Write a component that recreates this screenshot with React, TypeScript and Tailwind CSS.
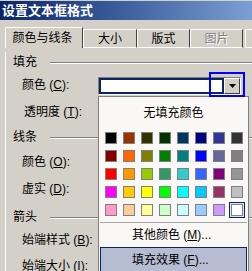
const palette = [
  ["#000000", "#993300", "#333300", "#003300", "#003366", "#000080", "#333399", "#333333"],
  ["#800000", "#FF6600", "#808000", "#008000", "#008080", "#0000FF", "#666699", "#808080"],
  ["#FF0000", "#FF9900", "#99CC00", "#339966", "#33CCCC", "#3366FF", "#800080", "#969696"],
  ["#FF00FF", "#FFCC00", "#FFFF00", "#00FF00", "#00FFFF", "#00CCFF", "#993366", "#C0C0C0"],
  ["#FF99CC", "#FFCC99", "#FFFF99", "#CCFFCC", "#CCFFFF", "#99CCFF", "#CC99FF", "#FFFFFF"],
];

const Key = ({ text, k }: { text: string; k: string }) => (
  <span>
    {text} (<span className="underline">{k}</span>):
  </span>
);

const Section = ({ title, className }: { title: string; className: string }) => (
  <div className={`flex items-center pl-[7px] ${className}`}>
    <span className="w-[37px]">{title}</span>
    <div className="flex-1 h-[2px] mt-[2px] border-t border-[#808080] bg-white" />
  </div>
);

const App = () => {
  return (
    <div className="relative w-[252px] h-[271px] overflow-hidden bg-[#d4d0c8] text-[12px] leading-none text-black font-['Liberation_Sans','Noto_Sans_CJK_SC',sans-serif]">
      {/* title bar */}
      <div className="mt-px h-[19px] flex items-center pl-[2px] bg-linear-to-r from-[#0a246a] to-[#7c9fd3] text-white font-bold text-[13px]">
        设置文本框格式
      </div>

      {/* tabs */}
      <div className="mt-[7px] flex items-end h-[21px] pl-[5px]">
        <div className="w-[78px] h-[21px] flex items-center justify-center pr-[3px] border-t border-l border-white border-r border-r-[#404040] rounded-tl-[2px]">
          颜色与线条
        </div>
        <div className="w-[54px] h-[19px] flex items-center justify-center border-t border-l border-b border-white border-r border-r-[#404040] rounded-tl-[2px]">
          大小
        </div>
        <div className="w-[53px] h-[19px] flex items-center justify-center border-t border-l border-b border-white border-r border-r-[#404040] rounded-tl-[2px]">
          版式
        </div>
        <div className="w-[53px] h-[19px] flex items-center justify-center border-t border-l border-b border-white border-r border-r-[#404040] rounded-tl-[2px] text-[#808080] [text-shadow:1px_1px_0_#ffffff]">
          图片
        </div>
        <div className="ml-[2px] flex-1 h-[19px] border-t border-l border-b border-white rounded-tl-[2px]" />
      </div>

      {/* panel */}
      <div className="ml-[5px] border-l border-white">
        <Section title="填充" className="mt-[4px] h-[19px]" />
        <div className="h-[28px] flex items-center pl-[16px]">
          <div className="w-[76px]">
            <Key text="颜色" k="C" />
          </div>
          <div className="mt-[2px] w-[143px] h-[18px] flex border-t border-l border-[#808080] border-b border-r border-b-white border-r-white">
            <div className="flex-1 border-2 border-[#0a246a] bg-white" />
            <div className="w-[16px] flex items-center justify-center bg-[#d4d0c8] border-t border-l border-white border-b border-r border-b-[#404040] border-r-[#404040]">
              <svg width="7" height="4" viewBox="0 0 7 4">
                <path d="M0 0h7L3.5 4z" fill="#000" />
              </svg>
            </div>
          </div>
        </div>
        <div className="h-[25px] flex items-center pl-[18px]">
          <Key text="透明度" k="T" />
        </div>
        <Section title="线条" className="h-[26px]" />
        <div className="h-[24px] flex items-center pl-[16px]">
          <Key text="颜色" k="O" />
        </div>
        <div className="h-[30px] flex items-center pl-[16px]">
          <Key text="虚实" k="D" />
        </div>
        <Section title="箭头" className="h-[26px]" />
        <div className="h-[20px] flex items-center pl-[16px]">
          <Key text="始端样式" k="B" />
        </div>
        <div className="h-[32px] flex items-center pl-[16px]">
          <Key text="始端大小" k="I" />
        </div>
      </div>

      {/* colour popup */}
      <div className="absolute left-[98px] top-[96px] w-[151px] h-[190px] border border-[#808080] bg-[#f9f8f6]">
        <div className="h-[32px] flex items-center justify-center">无填充颜色</div>
        <div className="pt-[3px] pl-[6px] grid grid-cols-[repeat(8,12px)] gap-[6px]">
          {palette.flat().map((c, i) => (
            <div
              key={i}
              className={`w-[12px] h-[12px] border border-[#808080] ${
                i === 39 ? "ring-1 ring-[#0a246a] ring-offset-1 ring-offset-[#e1e3ea]" : ""
              }`}
              style={{ backgroundColor: c }}
            />
          ))}
        </div>
        <div className="mt-[6px] mx-[1px] h-px bg-[#a6a6a6]" />
        <div className="h-[24px] flex items-center pl-[33px]">
          其他颜色 (<span className="underline">M</span>)...
        </div>
        <div className="mx-[1px] h-[26px] flex items-center pl-[31px] border border-[#0a246a] bg-[#b6bdd2]">
          填充效果 (<span className="underline">F</span>)...
        </div>
      </div>

      {/* focus highlight */}
      <div className="absolute left-[209px] top-[72px] w-[36px] h-[25px] border-2 border-[#0000ff]" />
    </div>
  );
};

export default App;
